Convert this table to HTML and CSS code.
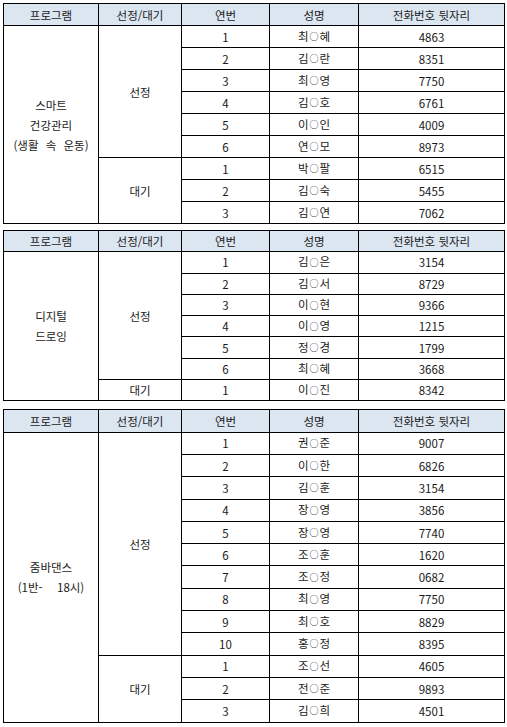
FILE: index.html
```html
<!DOCTYPE html>
<html lang="ko">
<head>
<meta charset="utf-8">
<link rel="stylesheet" href="styles.css">
</head>
<body>
<table class="roster roster-a">
  <colgroup><col class="c1"><col class="c2"><col class="c3"><col class="c4"><col class="c5"></colgroup>
  <tr class="head"><th>프로그램</th><th>선정/대기</th><th>연번</th><th>성명</th><th>전화번호 뒷자리</th></tr>
  <tr><td class="prog" rowspan="9">스마트<br>건강관리<br>(생활 속 운동)</td><td rowspan="6">선정</td><td>1</td><td>최<span class="mask">○</span>혜</td><td>4863</td></tr>
  <tr><td>2</td><td>김<span class="mask">○</span>란</td><td>8351</td></tr>
  <tr><td>3</td><td>최<span class="mask">○</span>영</td><td>7750</td></tr>
  <tr><td>4</td><td>김<span class="mask">○</span>호</td><td>6761</td></tr>
  <tr><td>5</td><td>이<span class="mask">○</span>인</td><td>4009</td></tr>
  <tr><td>6</td><td>연<span class="mask">○</span>모</td><td>8973</td></tr>
  <tr><td rowspan="3">대기</td><td>1</td><td>박<span class="mask">○</span>팔</td><td>6515</td></tr>
  <tr><td>2</td><td>김<span class="mask">○</span>숙</td><td>5455</td></tr>
  <tr><td>3</td><td>김<span class="mask">○</span>연</td><td>7062</td></tr>
</table>
<table class="roster roster-b">
  <colgroup><col class="c1"><col class="c2"><col class="c3"><col class="c4"><col class="c5"></colgroup>
  <tr class="head"><th>프로그램</th><th>선정/대기</th><th>연번</th><th>성명</th><th>전화번호 뒷자리</th></tr>
  <tr><td class="prog" rowspan="7">디지털<br>드로잉</td><td rowspan="6">선정</td><td>1</td><td>김<span class="mask">○</span>은</td><td>3154</td></tr>
  <tr><td>2</td><td>김<span class="mask">○</span>서</td><td>8729</td></tr>
  <tr><td>3</td><td>이<span class="mask">○</span>현</td><td>9366</td></tr>
  <tr><td>4</td><td>이<span class="mask">○</span>영</td><td>1215</td></tr>
  <tr><td>5</td><td>정<span class="mask">○</span>경</td><td>1799</td></tr>
  <tr><td>6</td><td>최<span class="mask">○</span>혜</td><td>3668</td></tr>
  <tr><td>대기</td><td>1</td><td>이<span class="mask">○</span>진</td><td>8342</td></tr>
</table>
<table class="roster roster-c">
  <colgroup><col class="c1"><col class="c2"><col class="c3"><col class="c4"><col class="c5"></colgroup>
  <tr class="head"><th>프로그램</th><th>선정/대기</th><th>연번</th><th>성명</th><th>전화번호 뒷자리</th></tr>
  <tr><td class="prog" rowspan="13">줌바댄스<br>(1반-&nbsp; 18시)</td><td rowspan="10">선정</td><td>1</td><td>권<span class="mask">○</span>준</td><td>9007</td></tr>
  <tr><td>2</td><td>이<span class="mask">○</span>한</td><td>6826</td></tr>
  <tr><td>3</td><td>김<span class="mask">○</span>훈</td><td>3154</td></tr>
  <tr><td>4</td><td>장<span class="mask">○</span>영</td><td>3856</td></tr>
  <tr><td>5</td><td>장<span class="mask">○</span>영</td><td>7740</td></tr>
  <tr><td>6</td><td>조<span class="mask">○</span>훈</td><td>1620</td></tr>
  <tr><td>7</td><td>조<span class="mask">○</span>정</td><td>0682</td></tr>
  <tr><td>8</td><td>최<span class="mask">○</span>영</td><td>7750</td></tr>
  <tr><td>9</td><td>최<span class="mask">○</span>호</td><td>8829</td></tr>
  <tr><td>10</td><td>홍<span class="mask">○</span>정</td><td>8395</td></tr>
  <tr><td rowspan="3">대기</td><td>1</td><td>조<span class="mask">○</span>선</td><td>4605</td></tr>
  <tr><td>2</td><td>전<span class="mask">○</span>준</td><td>9893</td></tr>
  <tr><td>3</td><td>김<span class="mask">○</span>희</td><td>4501</td></tr>
</table>
</body>
</html>
```

FILE: styles.css
```css
html, body {
  margin: 0;
  padding: 0;
  background: #ffffff;
}
body {
  padding: 3px 0 0 3px;
  font-family: "Noto Sans CJK KR", "Noto Sans", sans-serif;
  font-size: 11.5px;
  color: #1a1a1a;
}
.roster {
  border-collapse: collapse;
  table-layout: fixed;
  width: 501px;
  margin-bottom: 6px;
}
.roster-b { margin-bottom: 8px; }
.c1 { width: 95px; }
.c2 { width: 83px; }
.c3 { width: 88px; }
.c4 { width: 89px; }
.c5 { width: 146px; }
.roster th,
.roster td {
  border: 1px solid #000;
  padding: 0;
  text-align: center;
  vertical-align: middle;
  font-weight: 400;
  line-height: 14px;
}
.roster td.prog {
  line-height: 20px;
  word-spacing: 4px;
}
.mask {
  font-size: 9px;
  margin: 0 1px;
  position: relative;
  top: -0.5px;
}
.roster tr { height: 22px; }
.roster-b tr { height: 21.3px; }
.roster-c tr { height: 22.3px; }
.roster .head th {
  background: #dce6f1;
}
```
